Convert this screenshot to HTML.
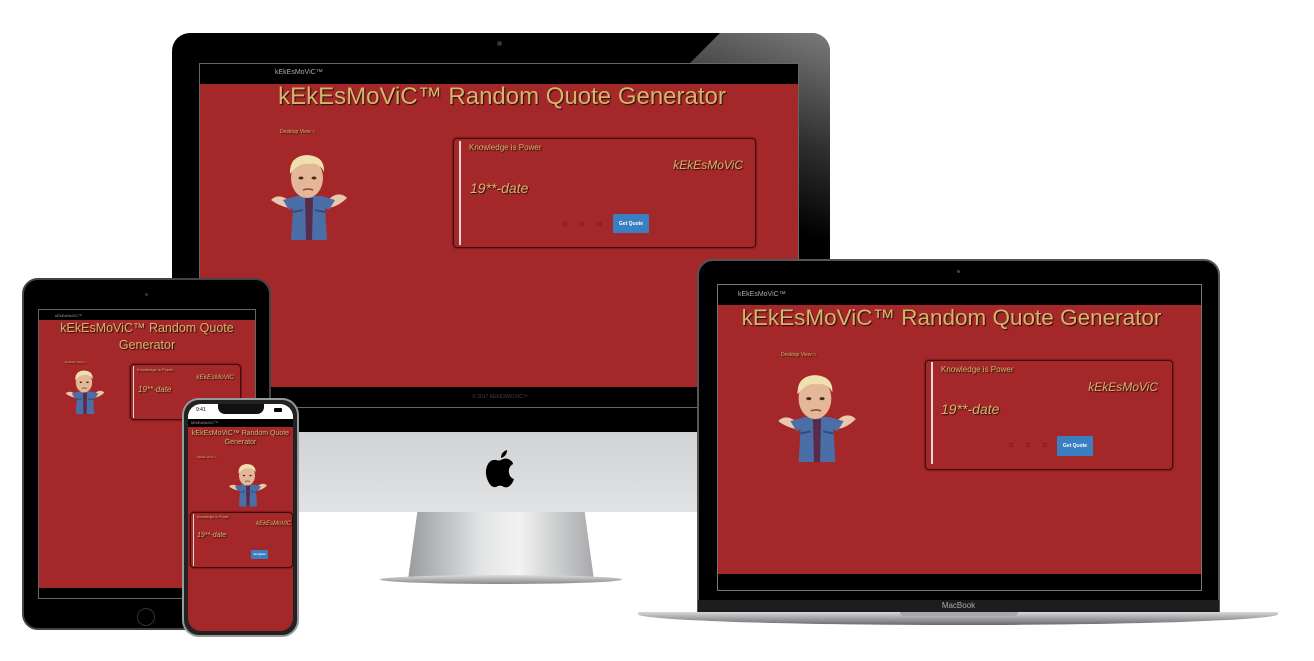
<!DOCTYPE html>
<html><head><meta charset="utf-8">
<style>
*{margin:0;padding:0;box-sizing:border-box}
body{width:1314px;height:661px;background:#fff;position:relative;overflow:hidden;font-family:"Liberation Sans",sans-serif}
.a{position:absolute}
.red{background:#a4282a}
.blk{background:#000}
.g{color:#d3b56b;text-shadow:1px 1px 1px #2a0a0a;white-space:nowrap}
.box{position:absolute;border:1px solid #3a0c0c;border-radius:4px;box-shadow:0 0 2px #400}
.bar{position:absolute;background:#e8d7d7;width:2px}
.btn{position:absolute;background:#3a7fc1;color:#fff;font-weight:bold;display:flex;align-items:center;justify-content:center;border-radius:1px}
.i{font-style:italic}
.sq{position:absolute;border:1px solid #7a2020;width:4px;height:4px}
</style></head><body>
<svg width="0" height="0" style="position:absolute">
<defs>
<symbol id="kid" viewBox="0 0 80 90">
<path d="M2 50 Q8 44 16 48 L24 52 L20 58 Q10 56 2 50Z" fill="#e9c8b0"/>
<path d="M78 48 Q72 42 64 46 L56 52 L60 58 Q70 56 78 48Z" fill="#e9c8b0"/>
<path d="M14 50 L28 46 L52 46 L66 50 L60 60 L56 58 L58 90 L22 90 L24 58 L20 60Z" fill="#4b6ea6"/>
<path d="M36 48 L44 48 L43 90 L37 90Z" fill="#5a2a4a"/>
<path d="M24 62 L34 60 M46 60 L56 62" stroke="#2d4e84" stroke-width="2"/>
<ellipse cx="38" cy="28" rx="16" ry="20" fill="#e4b798"/>
<path d="M21 24 Q20 6 38 5 Q56 6 55 22 Q50 12 40 14 Q30 12 21 24Z" fill="#efe0b0"/>
<ellipse cx="32" cy="28" rx="2.5" ry="1.5" fill="#4a2a1a"/>
<ellipse cx="45" cy="28" rx="2.5" ry="1.5" fill="#4a2a1a"/>
<path d="M34 40 Q39 38 44 40" stroke="#8a4a3a" stroke-width="1.5" fill="none"/>
</symbol>
</defs></svg>

<!-- iMac -->
<div class="a blk" style="left:172px;top:33px;width:658px;height:400px;border-radius:18px 18px 0 0"></div>
<div class="a" style="left:690px;top:33px;width:140px;height:250px;background:linear-gradient(200deg,#9a9a9a,#3a3a3a 40%,#000 70%);clip-path:polygon(30px 0,140px 0,140px 250px,0 250px,0 30px);border-radius:0 18px 0 0;opacity:.8"></div>
<div class="a" style="left:497px;top:41px;width:5px;height:5px;border-radius:50%;background:#333"></div>
<div class="a" style="left:172px;top:432px;width:658px;height:80px;background:linear-gradient(#d0d2d4,#e2e3e5)"></div>
<svg class="a" style="left:484px;top:448px" width="34" height="40" viewBox="0 0 34 40"><path d="M17 12 Q22 9 26 12 Q29 14 29 16 Q24 19 25 25 Q26 30 30 31 Q28 37 24 39 Q21 40 18 38 Q15 37 12 39 Q8 40 5 35 Q0 26 3 18 Q6 11 12 12 Q15 13 17 12Z M17 10 Q17 4 23 2 Q23 8 17 10Z" fill="#000"/></svg>
<div class="a" style="left:408px;top:512px;width:186px;height:68px;background:linear-gradient(90deg,#9a9b9d,#e4e5e6 40%,#f2f2f2 60%,#a8a9ab);clip-path:polygon(5% 0,95% 0,100% 100%,0 100%)"></div>
<div class="a" style="left:380px;top:575px;width:242px;height:9px;border-radius:50%;background:linear-gradient(#ddd,#888)"></div>
<div class="a blk" style="left:199px;top:63px;width:600px;height:345px;border:1px solid #666"></div>
<div class="a g" style="left:275px;top:69px;font-size:7px;color:#aaa;text-shadow:none">kEkEsMoViC™</div>
<div class="a red" style="left:200px;top:84px;width:598px;height:303px"></div>
<div class="a g" style="left:202px;top:83px;width:600px;text-align:center;font-size:24px">kEkEsMoViC™ Random Quote Generator</div>
<div class="a g" style="left:280px;top:129px;font-size:5px">Desktop View □</div>
<svg class="a" style="left:266px;top:150px" width="86" height="90"><use href="#kid"/></svg>
<div class="box" style="left:453px;top:138px;width:303px;height:110px"></div>
<div class="bar" style="left:459px;top:141px;height:104px"></div>
<div class="a g" style="left:469px;top:143px;font-size:8px">Knowledge is Power</div>
<div class="a g i" style="left:600px;top:158px;width:143px;text-align:right;font-size:12px">kEkEsMoViC</div>
<div class="a g i" style="left:470px;top:180px;font-size:14px">19**-date</div>
<div class="sq" style="left:563px;top:222px"></div><div class="sq" style="left:580px;top:222px"></div><div class="sq" style="left:597px;top:222px"></div>
<div class="btn" style="left:613px;top:214px;width:36px;height:19px;font-size:5px">Get Quote</div>
<div class="a" style="left:200px;top:394px;width:600px;text-align:center;font-size:5px;color:#444">© 2017 KEKESMOVIC™</div>

<!-- Laptop -->
<div class="a" style="left:697px;top:259px;width:523px;height:354px;background:#000;border-radius:16px 16px 0 0;border:2px solid #555"></div>
<div class="a" style="left:957px;top:270px;width:3px;height:3px;border-radius:50%;background:#444"></div>
<div class="a blk" style="left:717px;top:284px;width:485px;height:307px;border:1px solid #777"></div>
<div class="a" style="left:738px;top:291px;font-size:7px;color:#aaa">kEkEsMoViC™</div>
<div class="a red" style="left:718px;top:305px;width:483px;height:269px"></div>
<div class="a g" style="left:724px;top:305px;width:483px;text-align:center;font-size:22.5px;transform:translateX(-14px)">kEkEsMoViC™ Random Quote Generator</div>
<div class="a g" style="left:781px;top:352px;font-size:5px">Desktop View □</div>
<svg class="a" style="left:774px;top:370px" width="86" height="92"><use href="#kid"/></svg>
<div class="box" style="left:925px;top:360px;width:248px;height:110px"></div>
<div class="bar" style="left:931px;top:362px;height:102px"></div>
<div class="a g" style="left:941px;top:365px;font-size:8px">Knowledge is Power</div>
<div class="a g i" style="left:1040px;top:380px;width:118px;text-align:right;font-size:12px">kEkEsMoViC</div>
<div class="a g i" style="left:941px;top:401px;font-size:14px">19**-date</div>
<div class="sq" style="left:1009px;top:443px"></div><div class="sq" style="left:1026px;top:443px"></div><div class="sq" style="left:1043px;top:443px"></div>
<div class="btn" style="left:1057px;top:436px;width:36px;height:20px;font-size:5px">Get Quote</div>
<div class="a" style="left:698px;top:600px;width:521px;height:13px;background:#1d1d1f"></div>
<div class="a" style="left:698px;top:601px;width:521px;text-align:center;font-size:8px;color:#aaa">MacBook</div>
<div class="a" style="left:638px;top:612px;width:640px;height:13px;background:linear-gradient(#d8d8da,#6a6a6c);border-radius:2px 2px 60% 60%/2px 2px 100% 100%"></div>
<div class="a" style="left:900px;top:612px;width:118px;height:4px;background:#a8a8aa;border-radius:0 0 4px 4px"></div>

<!-- iPad -->
<div class="a blk" style="left:22px;top:278px;width:249px;height:352px;border-radius:16px;border:2px solid #444"></div>
<div class="a" style="left:145px;top:293px;width:3px;height:3px;border-radius:50%;background:#333"></div>
<div class="a" style="left:137px;top:608px;width:18px;height:18px;border-radius:50%;border:1px solid #333"></div>
<div class="a blk" style="left:38px;top:309px;width:218px;height:290px;border:1px solid #666"></div>
<div class="a" style="left:55px;top:313px;font-size:4px;color:#999">kEkEsMoViC™</div>
<div class="a red" style="left:39px;top:320px;width:216px;height:268px"></div>
<div class="a g" style="left:39px;top:320px;width:216px;text-align:center;font-size:12.5px;line-height:17px;white-space:normal">kEkEsMoViC™ Random Quote<br>Generator</div>
<div class="a g" style="left:65px;top:360px;font-size:3px">Desktop View □</div>
<svg class="a" style="left:63px;top:368px" width="44" height="46"><use href="#kid"/></svg>
<div class="box" style="left:130px;top:364px;width:111px;height:56px"></div>
<div class="bar" style="left:133px;top:366px;height:52px;width:1px"></div>
<div class="a g" style="left:137px;top:367px;font-size:4px">Knowledge is Power</div>
<div class="a g i" style="left:180px;top:374px;width:54px;text-align:right;font-size:6.5px">kEkEsMoViC</div>
<div class="a g i" style="left:138px;top:385px;font-size:8px">19**-date</div>

<!-- iPhone -->
<div class="a" style="left:182px;top:398px;width:117px;height:239px;border-radius:17px;background:#222;border:2px solid #999"></div>
<div class="a" style="left:188px;top:404px;width:105px;height:227px;border-radius:13px;overflow:hidden;background:#a4282a">
  <div class="a" style="left:0;top:0;width:105px;height:15px;background:#fff"></div>
  <div class="a" style="left:30px;top:0;width:46px;height:10px;background:#111;border-radius:0 0 7px 7px"></div>
  <div class="a" style="left:8px;top:3px;font-size:5px;color:#000">9:41</div>
  <div class="a" style="left:86px;top:4px;width:8px;height:4px;background:#000;border-radius:1px"></div>
  <div class="a blk" style="left:0;top:15px;width:105px;height:8px"></div>
  <div class="a" style="left:3px;top:16px;font-size:4px;color:#999">kEkEsMoViC™</div>
  <div class="a g" style="left:0;top:25px;width:105px;text-align:center;font-size:7px;line-height:9px;white-space:normal">kEkEsMoViC™ Random Quote<br>Generator</div>
  <div class="a g" style="left:9px;top:51px;font-size:3px">Mobile View □</div>
  <svg class="a" style="left:40px;top:56px" width="40" height="48"><use href="#kid"/></svg>
  <div class="box" style="left:2px;top:108px;width:103px;height:56px"></div>
  <div class="bar" style="left:5px;top:110px;height:52px;width:1px"></div>
  <div class="a g" style="left:9px;top:111px;font-size:3.5px">Knowledge is Power</div>
  <div class="a g i" style="left:50px;top:117px;width:53px;text-align:right;font-size:6px">kEkEsMoViC</div>
  <div class="a g i" style="left:9px;top:128px;font-size:7px">19**-date</div>
  <div class="btn" style="left:63px;top:146px;width:17px;height:9px;font-size:2.5px">Get Quote</div>
</div>
</body></html>
